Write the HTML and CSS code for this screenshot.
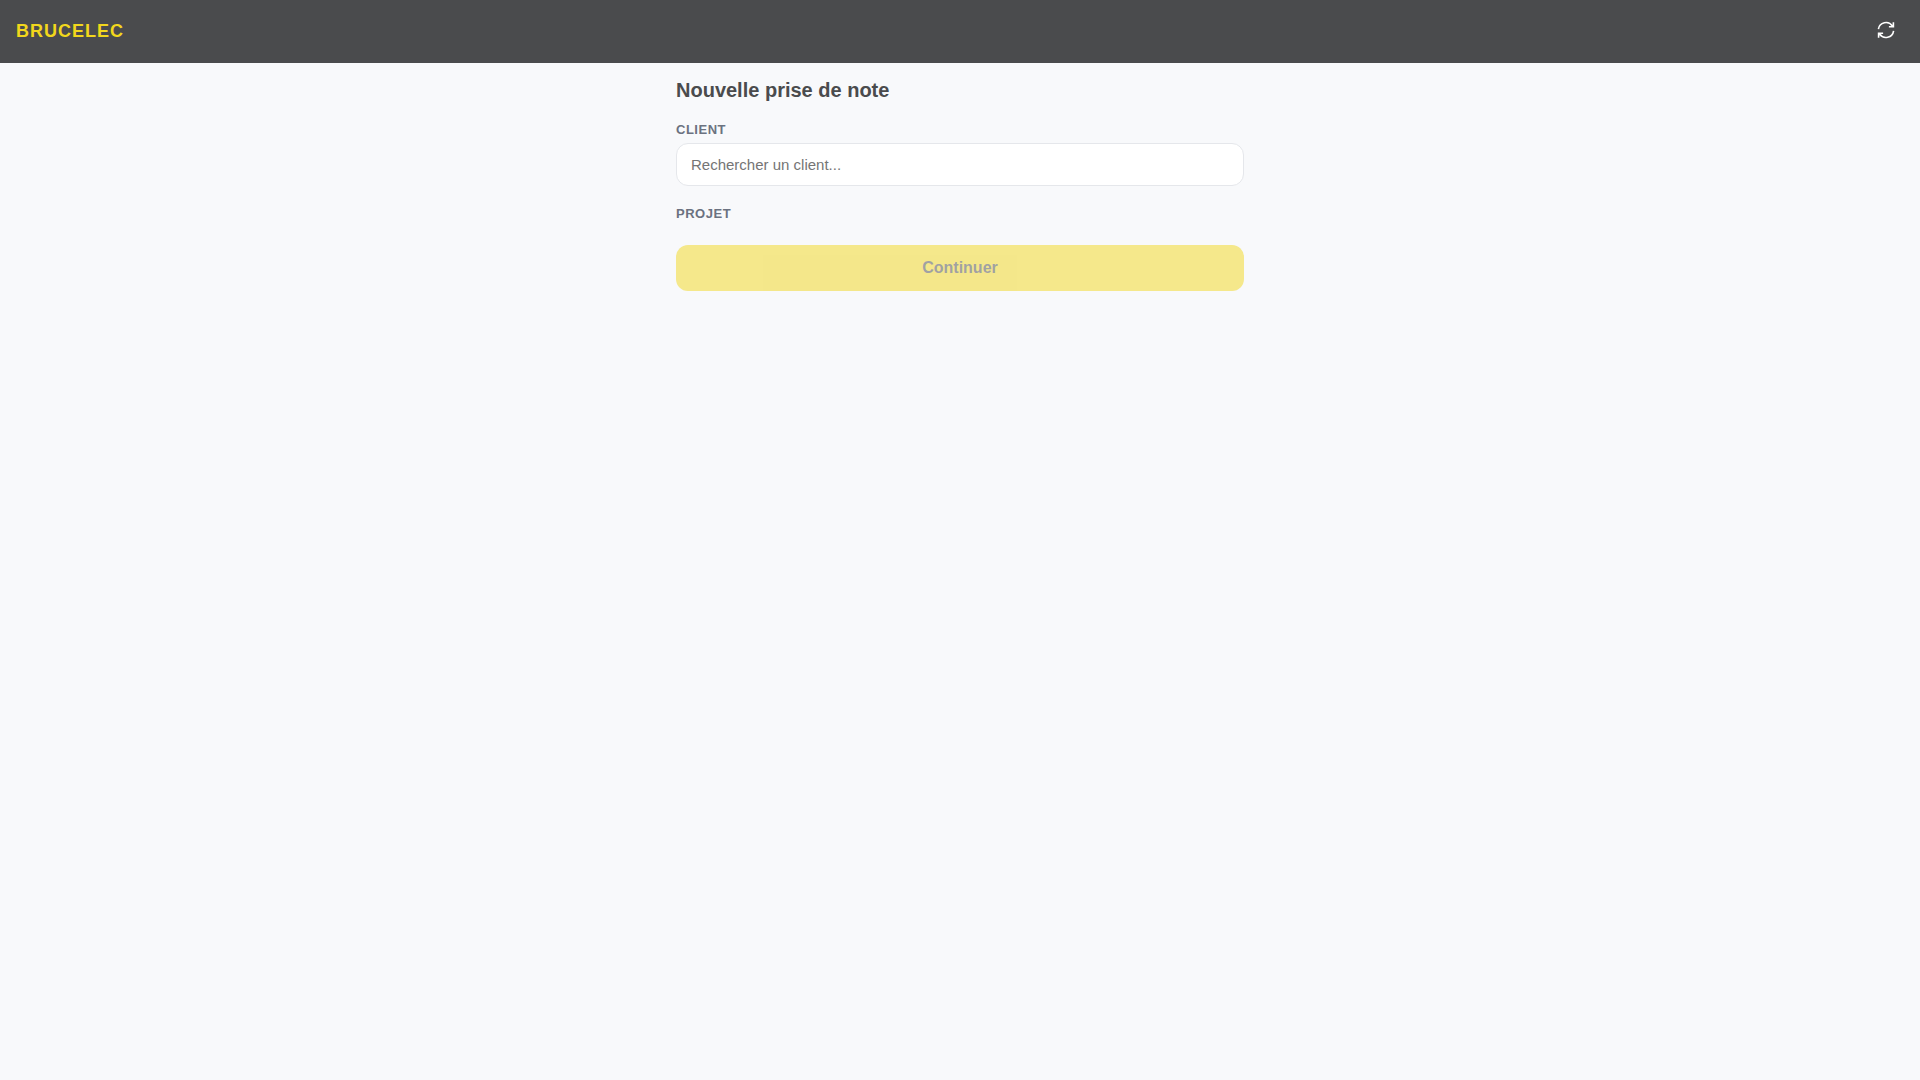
FILE: index.html
```html
<!DOCTYPE html>
<html lang="fr">
<head>
<meta charset="utf-8">
<meta name="viewport" content="width=device-width, initial-scale=1">
<title>Brucelec</title>
<link rel="stylesheet" href="styles.css">
</head>
<body>
<header class="topbar">
  <span class="brand">BRUCELEC</span>
  <button class="icon-button" type="button" aria-label="Synchroniser">
    <svg class="icon" viewBox="0 0 20 20" aria-hidden="true"><path d="M2.400 9.200a7.700 7.700 0 0 1 14-3.200M17.400 2.200v4.500h-4.500M17.600 10.800a7.700 7.700 0 0 1-14 3.200M2.600 17.800v-4.500h4.500"/></svg>
  </button>
</header>
<main class="page">
  <h1 class="title">Nouvelle prise de note</h1>
  <form class="form">
    <div class="field">
      <label class="label" for="client">Client</label>
      <input class="input" id="client" type="text" placeholder="Rechercher un client...">
    </div>
    <div class="field"><span class="label">Projet</span></div>
    <button class="submit" type="submit" disabled>Continuer</button>
  </form>
</main>
</body>
</html>
```
FILE: styles.css
```css
* { box-sizing: border-box; }

body {
  margin: 0;
  background: #f8f9fb;
  color: #4a4b4d;
  font: 16px/24px "Liberation Sans", Arial, sans-serif;
}

.topbar {
  display: flex;
  align-items: center;
  justify-content: space-between;
  padding: 12px 16px 13px;
  background: #4a4b4d;
}

.brand {
  color: #f2d71c;
  font-size: 18px;
  font-weight: 700;
  letter-spacing: 1px;
}

.icon-button {
  display: flex;
  align-items: flex-start;
  justify-content: center;
  width: 36px;
  height: 38px;
  padding: 8px;
  border: 0;
  background: none;
  color: #fff;
}

.icon {
  width: 20px;
  height: 20px;
  fill: none;
  stroke: currentColor;
  stroke-width: 1.6;
}

.page {
  max-width: 600px;
  margin: 0 auto;
  padding: 16px;
}

.title {
  margin: 0 0 20px;
  font-size: 20px;
  line-height: 23px;
}

.field { margin-bottom: 20px; }

.label {
  display: block;
  margin-bottom: 6px;
  color: #6b7280;
  font-size: 13px;
  font-weight: 700;
  line-height: 15px;
  letter-spacing: 0.04em;
  text-transform: uppercase;
}

.input {
  display: block;
  width: 100%;
  padding: 12px 14px;
  border: 1px solid #e5e7eb;
  border-radius: 12px;
  background: #fff;
  font: 15px/17px "Liberation Sans", Arial, sans-serif;
}

.submit {
  display: block;
  width: 100%;
  margin-top: 24px;
  padding: 14px;
  border: 0;
  border-radius: 12px;
  background: #f2d71c;
  color: #4a4b4d;
  font: 700 16px/18px "Liberation Sans", Arial, sans-serif;
  opacity: 0.5;
}
```
